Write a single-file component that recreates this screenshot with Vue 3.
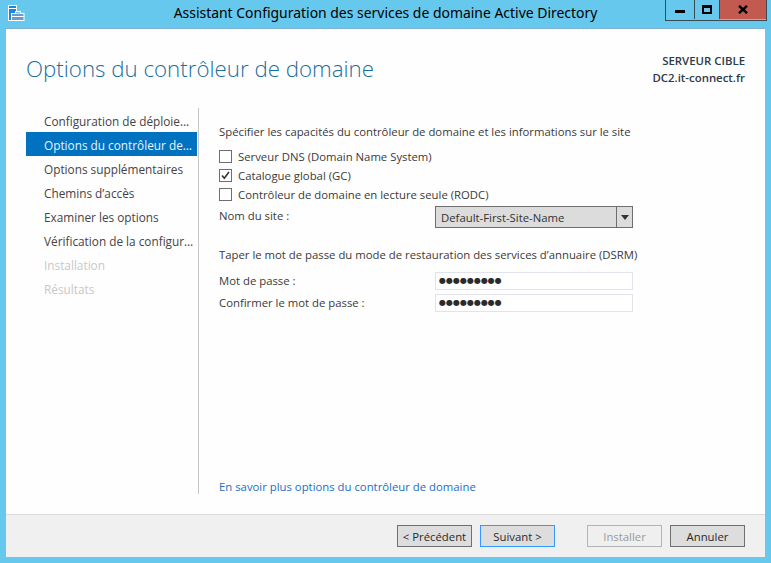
<script setup>
const steps = [
  { label: 'Configuration de déploie…' },
  { label: 'Options du contrôleur de…', active: true },
  { label: 'Options supplémentaires' },
  { label: 'Chemins d’accès' },
  { label: 'Examiner les options' },
  { label: 'Vérification de la configur…' },
  { label: 'Installation', disabled: true },
  { label: 'Résultats', disabled: true }
]
const checks = [
  { label: 'Serveur DNS (Domain Name System)', checked: false },
  { label: 'Catalogue global (GC)', checked: true },
  { label: 'Contrôleur de domaine en lecture seule (RODC)', checked: false }
]
</script>

<template>
  <div class="window">
    <header class="titlebar">
      <svg class="appicon" width="18" height="17" viewBox="0 0 18 17">
        <rect x="0.5" y="0.5" width="8" height="15" fill="#1f86de" stroke="#fff" />
        <rect x="1" y="3" width="7" height="1" fill="#fff" />
        <rect x="3.5" y="8.5" width="12.5" height="7" fill="#6d9ac8" stroke="#fff" />
        <path d="M7.5 8.5V6.5h5v2" fill="#66c8ec" stroke="#fff" />
        <path d="M4 11.5h12" stroke="#fff" />
      </svg>
      <h1 class="wintitle">Assistant Configuration des services de domaine Active Directory</h1>
      <div class="controls">
        <div class="ctl ctl-min"><span class="glyph-min"></span></div>
        <div class="ctl ctl-max"><span class="glyph-max"></span></div>
        <div class="ctl ctl-close">
          <svg width="10" height="9" viewBox="0 0 10 9"><path d="M1 0.8 9 8.2M9 0.8 1 8.2" stroke="#000" stroke-width="2.4" fill="none" /></svg>
        </div>
      </div>
    </header>

    <div class="client">
      <div class="head">
        <h2 class="pagetitle">Options du contrôleur de domaine</h2>
        <div class="target">
          <div>SERVEUR CIBLE</div>
          <div>DC2.it-connect.fr</div>
        </div>
      </div>

      <div class="body">
        <nav class="nav">
          <div
            v-for="s in steps"
            :key="s.label"
            class="step"
            :class="{ active: s.active, disabled: s.disabled }"
          >{{ s.label }}</div>
        </nav>

        <main class="pane">
          <p class="intro">Spécifier les capacités du contrôleur de domaine et les informations sur le site</p>
          <div class="checks">
            <label v-for="c in checks" :key="c.label" class="check">
              <span class="box">
                <svg v-if="c.checked" width="11" height="11" viewBox="0 0 11 11"><path d="M2 5.5 4.3 8.2 9 2" fill="none" stroke="#333" stroke-width="1.6" /></svg>
              </span>
              {{ c.label }}
            </label>
          </div>
          <div class="row site">
            <span class="lbl">Nom du site :</span>
            <div class="combo">
              <span class="combo-val">Default-First-Site-Name</span>
              <span class="combo-btn"><i class="arrow"></i></span>
            </div>
          </div>
          <p class="intro2">Taper le mot de passe du mode de restauration des services d’annuaire (DSRM)</p>
          <div class="row pw">
            <span class="lbl">Mot de passe :</span>
            <div class="input">●●●●●●●●●</div>
          </div>
          <div class="row pw second">
            <span class="lbl">Confirmer le mot de passe :</span>
            <div class="input">●●●●●●●●●</div>
          </div>
          <a class="more">En savoir plus options du contrôleur de domaine</a>
        </main>
      </div>

      <footer class="foot">
        <button class="btn">&lt; Précédent</button>
        <button class="btn focus">Suivant &gt;</button>
        <button class="btn off gapl">Installer</button>
        <button class="btn">Annuler</button>
      </footer>
    </div>
  </div>
</template>

<style>
html, body { margin: 0; padding: 0; }
</style>

<style scoped>
.window {
  width: 771px;
  height: 563px;
  box-sizing: border-box;
  background: #66c8ec;
  padding: 0 6px 6px;
  display: flex;
  flex-direction: column;
  overflow: hidden;
  font-family: "Open Sans", "Noto Sans", sans-serif;
  font-size: 11.33px;
  color: #3a3a3a;
}
.titlebar {
  height: 29px;
  flex: none;
  position: relative;
  display: flex;
  justify-content: center;
}
.appicon { position: absolute; left: 2px; top: 5px; }
.wintitle {
  margin: 3px 0 0;
  font-size: 13.95px;
  line-height: 20px;
  font-weight: 400;
  color: #000;
  font-family: "Noto Sans", sans-serif;
}
.controls {
  position: absolute;
  right: -2px;
  top: 0;
  height: 20px;
  display: flex;
  border: 1px solid #3c4a52;
  border-top: 0;
}
.ctl {
  height: 19px;
  display: flex;
  align-items: center;
  justify-content: center;
}
.ctl-min { width: 28px; border-right: 1px solid #3c4a52; }
.ctl-max { width: 24px; border-right: 1px solid #3c4a52; }
.ctl-close { width: 46px; background: #c25a50; }
.glyph-min { width: 10px; height: 3px; background: #000; margin-top: 4px; }
.glyph-max { width: 6px; height: 4px; border: 2px solid #000; border-top-width: 3px; }

.client {
  flex: 1;
  min-height: 0;
  background: #fefefe;
  display: flex;
  flex-direction: column;
  box-shadow: 0 -1px 0 #7fb0cc;
}
.head {
  height: 79px;
  flex: none;
  display: flex;
  justify-content: space-between;
  padding: 0 20px;
}
.pagetitle {
  margin: 22px 0 0;
  font-size: 22.3px;
  line-height: 36px;
  font-weight: 300;
  color: #1b6f9e;
}
.target {
  margin-top: 23px;
  text-align: right;
  font-size: 11.4px;
  line-height: 17px;
  font-weight: 600;
  color: #2d3a4a;
}
.body {
  flex: 1;
  min-height: 0;
  display: flex;
  padding-bottom: 20px;
  padding-left: 20px;
}
.nav {
  width: 171px;
  flex: none;
}
.step {
  height: 24px;
  box-sizing: border-box;
  padding: 1px 0 0 18px;
  line-height: 24px;
  font-size: 11.8px;
  white-space: nowrap;
  overflow: hidden;
  color: #444;
}
.step.active { background: #0072c0; color: #eaf3fb; }
.step.disabled { color: #c8c8c8; }
.pane {
  flex: 1;
  margin-left: 1px;
  border-left: 1px solid #c6c6c6;
  padding-left: 20px;
  padding-right: 20px;
  display: flex;
  flex-direction: column;
}
.intro { margin: 16px 0 0; line-height: 16px; white-space: nowrap; }
.checks { margin-top: 8px; display: flex; flex-direction: column; gap: 3px; }
.check { display: flex; align-items: center; height: 16px; white-space: nowrap; }
.box {
  width: 11px;
  height: 11px;
  border: 1px solid #6e6e6e;
  background: #fff;
  margin-right: 6px;
  display: flex;
  flex: none;
}
.row { display: flex; align-items: center; }
.lbl { width: 216px; flex: none; white-space: nowrap; }
.site { margin-top: 4px; }
.site .lbl { margin-top: -4px; }
.combo {
  width: 198px;
  height: 22px;
  box-sizing: border-box;
  border: 1px solid #6e6e6e;
  background: #dcdcdc;
  display: flex;
}
.combo-val { flex: 1; padding-left: 5px; line-height: 21px; color: #333; }
.combo-btn {
  width: 15px;
  border-left: 1px solid #6e6e6e;
  display: flex;
  align-items: center;
  justify-content: center;
}
.arrow {
  width: 0;
  height: 0;
  border-left: 4px solid transparent;
  border-right: 4px solid transparent;
  border-top: 5px solid #333;
}
.intro2 { margin: 19px 0 0; line-height: 16px; white-space: nowrap; }
.pw { margin-top: 9px; }
.pw .lbl { margin-top: -1px; }
.pw.second { margin-top: 4px; }
.input {
  width: 198px;
  height: 18px;
  box-sizing: border-box;
  border: 1px solid #e2e3ea;
  background: #fff;
  padding-left: 3px;
  font-family: "DejaVu Sans", sans-serif;
  font-size: 8px;
  line-height: 16px;
  letter-spacing: 0;
  color: #2a2a2a;
}
.more {
  margin-top: auto;
  margin-bottom: -1px;
  line-height: 16px;
  color: #1a6fc0;
}
.foot {
  height: 43px;
  flex: none;
  box-sizing: border-box;
  background: #f0f0f0;
  border-top: 1px solid #dadada;
  display: flex;
  align-items: flex-start;
  padding: 10px 20px 0 391px;
  gap: 8px;
}
.btn {
  width: 75px;
  height: 22px;
  padding: 0;
  box-sizing: border-box;
  border: 1px solid #707070;
  background: #dddddd;
  font: inherit;
  color: #2a2a2a;
}
.btn.focus { border-color: #3399ff; }
.btn.off { border-color: #b4b4b4; background: #efefef; color: #9a9a9a; }
.gapl { margin-left: 24px; }
</style>
